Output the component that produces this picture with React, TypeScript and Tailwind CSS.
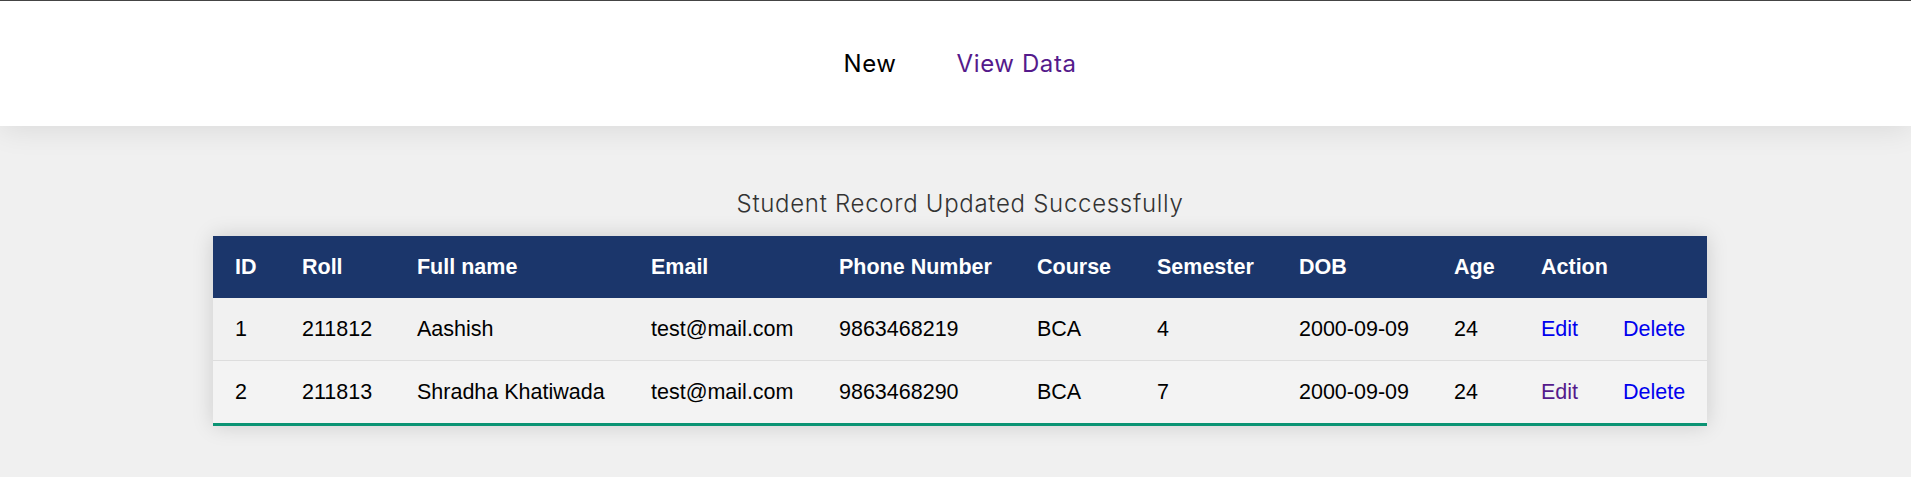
import React from "react";

interface Student {
  id: number;
  roll: string;
  name: string;
  email: string;
  phone: string;
  course: string;
  semester: number;
  dob: string;
  age: number;
  visited: boolean;
}

const students: Student[] = [
  { id: 1, roll: "211812", name: "Aashish", email: "test@mail.com", phone: "9863468219", course: "BCA", semester: 4, dob: "2000-09-09", age: 24, visited: false },
  { id: 2, roll: "211813", name: "Shradha Khatiwada", email: "test@mail.com", phone: "9863468290", course: "BCA", semester: 7, dob: "2000-09-09", age: 24, visited: true },
];

const colWidths = [67, 115, 234, 188, 198, 120, 142, 155, 87, 82, 106];
const headers = ["ID", "Roll", "Full name", "Email", "Phone Number", "Course", "Semester", "DOB", "Age"];

export default function App() {
  return (
    <div className="min-h-screen bg-[#f0f0f0] font-['Liberation_Sans',Arial,sans-serif]">
      {/* nav */}
      <header className="relative z-10 border-t border-[#444] bg-white shadow-[0_4px_28px_rgba(0,0,0,0.09)]">
        <nav className="flex h-[125px] items-center justify-center gap-[60px] pl-[9px] font-['Inter',sans-serif] text-[24px] tracking-[0.6px]">
          <a href="#" className="text-black">New</a>
          <a href="#" className="text-[#551a8b]">View Data</a>
        </nav>
      </header>

      <main className="flex flex-col items-center pl-[9px] pt-[63px] pb-10">
        <p className="font-['Inter',sans-serif] text-[24px] font-light leading-[29px] tracking-[0.7px] text-[#333]">
          Student Record Updated Successfully
        </p>

        <table className="mt-[18px] w-[1494px] table-fixed border-collapse text-left text-[21.5px] shadow-[0_0_20px_rgba(0,0,0,0.15)]">
          <colgroup>
            {colWidths.map((w, i) => (
              <col key={i} style={{ width: w }} />
            ))}
          </colgroup>
          <thead>
            <tr className="bg-[#1b366b] text-white">
              {headers.map((h) => (
                <th key={h} className="pl-[22px] py-[18px] font-bold leading-[26px] whitespace-nowrap">{h}</th>
              ))}
              <th colSpan={2} className="pl-[22px] py-[18px] font-bold leading-[26px]">Action</th>
            </tr>
          </thead>
          <tbody>
            {students.map((s, i) => (
              <tr
                key={s.id}
                className={
                  i === students.length - 1
                    ? "border-b-[3px] border-[#0a9373] bg-[#f3f3f3] text-black"
                    : "border-b border-[#dddddd] bg-[#f1f1f1] text-black"
                }
              >
                <td className="pl-[22px] py-[18px] leading-[26px]">{s.id}</td>
                <td className="pl-[22px] py-[18px] leading-[26px]">{s.roll}</td>
                <td className="pl-[22px] py-[18px] leading-[26px] whitespace-nowrap">{s.name}</td>
                <td className="pl-[22px] py-[18px] leading-[26px]">{s.email}</td>
                <td className="pl-[22px] py-[18px] leading-[26px]">{s.phone}</td>
                <td className="pl-[22px] py-[18px] leading-[26px]">{s.course}</td>
                <td className="pl-[22px] py-[18px] leading-[26px]">{s.semester}</td>
                <td className="pl-[22px] py-[18px] leading-[26px]">{s.dob}</td>
                <td className="pl-[22px] py-[18px] leading-[26px]">{s.age}</td>
                <td className="pl-[22px] py-[18px] leading-[26px]">
                  <a href="#" className={s.visited ? "text-[#551a8b]" : "text-[#0000ee]"}>Edit</a>
                </td>
                <td className="pl-[22px] py-[18px] leading-[26px]">
                  <a href="#" className="text-[#0000ee]">Delete</a>
                </td>
              </tr>
            ))}
          </tbody>
        </table>
      </main>
    </div>
  );
}
